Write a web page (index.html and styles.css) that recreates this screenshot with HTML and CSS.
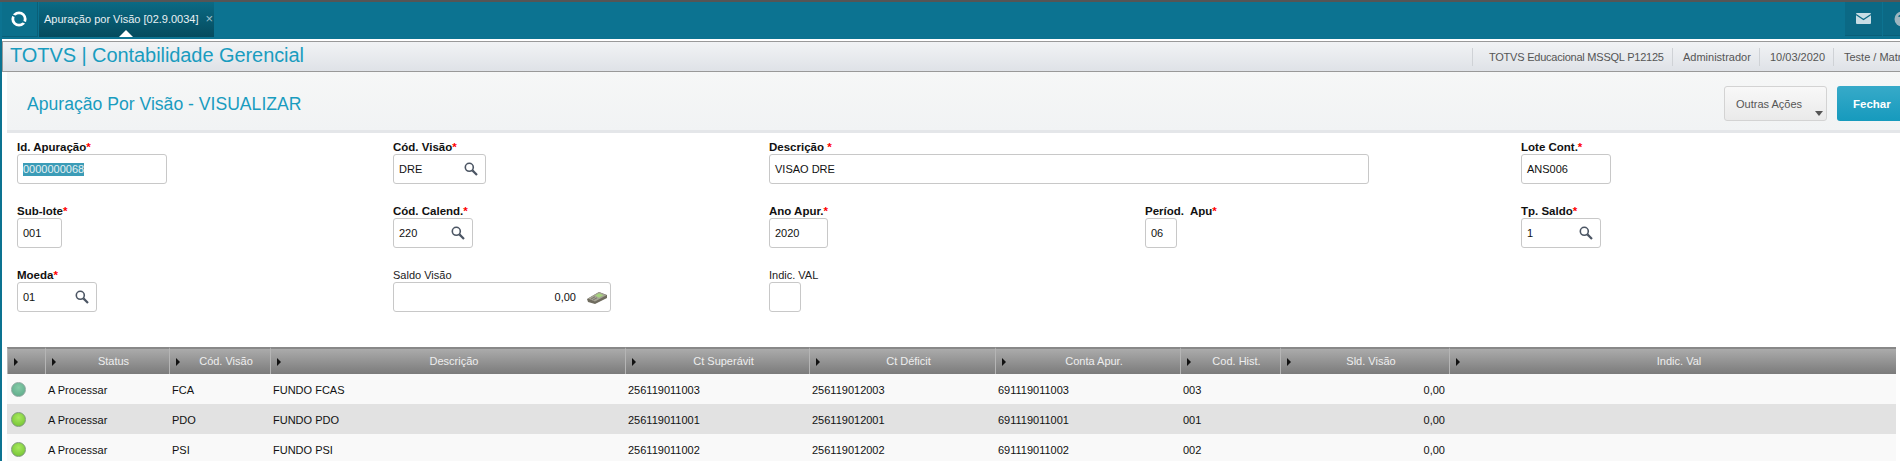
FILE: index.html

```html
<!DOCTYPE html>
<html lang="pt-BR">
<head>
  <meta charset="UTF-8">
  <title>Apuração por Visão</title>
  <link rel="stylesheet" href="styles.css">
</head>
<body>

  <div class="topbar">
    <div class="logo">
      <svg width="20" height="20" viewBox="0 0 20 20">
        <circle cx="10" cy="10" r="6.2" fill="none" stroke="#fff" stroke-width="2.8"/>
        <path d="M3 6 L11 9.5 M9 10.5 L17 14" fill="none" stroke="#0b6f8b" stroke-width="1.8"/>
      </svg>
    </div>
    <div class="tab">
      <span>Apuração por Visão [02.9.0034]</span>
      <span class="tab-close">×</span>
    </div>
    <div class="top-icons">
      <div class="top-icon">
        <svg width="15" height="11" viewBox="0 0 15 11">
          <rect width="15" height="11" rx="1" fill="#c8dde5"/>
          <path d="M0 1.5 L7.5 6.5 L15 1.5" fill="none" stroke="#0b6985" stroke-width="1.2"/>
        </svg>
      </div>
      <div class="top-icon">
        <svg width="16" height="16" viewBox="0 0 16 16">
          <circle cx="8" cy="8" r="7.5" fill="#9db6c0"/>
          <path d="M5 6 C5 3.5 11 3.5 11 6" fill="none" stroke="#0b6985" stroke-width="1.5"/>
        </svg>
      </div>
    </div>
  </div>

  <div class="main">
    <div class="app-header">
      <div class="app-title">TOTVS | Contabilidade Gerencial</div>
      <div class="app-info">
        <span class="info-env">TOTVS Educacional MSSQL P12125</span>
        <span class="info-user">Administrador</span>
        <span class="info-date">10/03/2020</span>
        <span class="info-branch">Teste / Matriz</span>
      </div>
    </div>

    <div class="content">
      <div class="page-head">
        <h1>Apuração Por Visão - VISUALIZAR</h1>
        <div class="actions">
          <button class="btn btn-more">Outras Ações<i class="caret"></i></button>
          <button class="btn btn-close">Fechar</button>
        </div>
      </div>

      <div class="form">
        <div class="field">
          <label class="req">Id. Apuração<b>*</b></label>
          <div class="input w-id"><span class="selected">0000000068</span></div>
        </div>
        <div class="field">
          <label class="req">Cód. Visão<b>*</b></label>
          <div class="input w-visao">DRE
            <svg class="lupa" viewBox="0 0 14 14"><circle cx="5.3" cy="5.3" r="4" fill="#fff" stroke="#4b5563" stroke-width="1.6"/><path d="M8.4 8.4 L13 13" stroke="#4b5563" stroke-width="2.2"/></svg>
          </div>
        </div>
        <div class="field span-2">
          <label class="req">Descrição <b>*</b></label>
          <div class="input w-desc">VISAO DRE</div>
        </div>
        <div class="field">
          <label class="req">Lote Cont.<b>*</b></label>
          <div class="input w-lote">ANS006</div>
        </div>

        <div class="field">
          <label class="req">Sub-lote<b>*</b></label>
          <div class="input w-sub">001</div>
        </div>
        <div class="field">
          <label class="req">Cód. Calend.<b>*</b></label>
          <div class="input w-lookup">220
            <svg class="lupa" viewBox="0 0 14 14"><circle cx="5.3" cy="5.3" r="4" fill="#fff" stroke="#4b5563" stroke-width="1.6"/><path d="M8.4 8.4 L13 13" stroke="#4b5563" stroke-width="2.2"/></svg>
          </div>
        </div>
        <div class="field">
          <label class="req">Ano Apur.<b>*</b></label>
          <div class="input w-ano">2020</div>
        </div>
        <div class="field">
          <label class="req">Períod.&nbsp; Apu<b>*</b></label>
          <div class="input w-per">06</div>
        </div>
        <div class="field">
          <label class="req">Tp. Saldo<b>*</b></label>
          <div class="input w-lookup">1
            <svg class="lupa" viewBox="0 0 14 14"><circle cx="5.3" cy="5.3" r="4" fill="#fff" stroke="#4b5563" stroke-width="1.6"/><path d="M8.4 8.4 L13 13" stroke="#4b5563" stroke-width="2.2"/></svg>
          </div>
        </div>

        <div class="field">
          <label class="req">Moeda<b>*</b></label>
          <div class="input w-lookup">01
            <svg class="lupa" viewBox="0 0 14 14"><circle cx="5.3" cy="5.3" r="4" fill="#fff" stroke="#4b5563" stroke-width="1.6"/><path d="M8.4 8.4 L13 13" stroke="#4b5563" stroke-width="2.2"/></svg>
          </div>
        </div>
        <div class="field">
          <label>Saldo Visão</label>
          <div class="input w-saldo">
            <span class="amount">0,00</span>
            <svg class="calc" viewBox="0 0 20 13">
              <path d="M0 8 L12 1 L20 4 L20 7 L8 13 L1 11 Z" fill="#6f6c5f"/>
              <path d="M1 7.5 L12 1 L19.5 4.2 L8 10.5 Z" fill="#a5a395"/>
              <path d="M8 4.5 L12 2.3 L16.5 4.3 L12 6.8 Z" fill="#a6d37e"/>
              <path d="M4 8 L8 5.8 M6 9 L10 6.8" stroke="#6f6c5f" stroke-width="0.8"/>
            </svg>
          </div>
        </div>
        <div class="field">
          <label>Indic. VAL</label>
          <div class="input w-indic"></div>
        </div>
      </div>

      <table class="grid">
        <colgroup>
          <col class="c-led"><col class="c-status"><col class="c-cod"><col class="c-desc"><col class="c-sup"><col class="c-def"><col class="c-conta"><col class="c-hist"><col class="c-sld"><col class="c-ind">
        </colgroup>
        <thead>
          <tr>
            <th></th>
            <th>Status</th>
            <th>Cód. Visão</th>
            <th>Descrição</th>
            <th>Ct Superávit</th>
            <th>Ct Déficit</th>
            <th>Conta Apur.</th>
            <th>Cod. Hist.</th>
            <th>Sld. Visão</th>
            <th>Indic. Val</th>
          </tr>
        </thead>
        <tbody>
          <tr>
            <td><i class="led led-first"></i></td>
            <td>A Processar</td>
            <td>FCA</td>
            <td>FUNDO FCAS</td>
            <td>256119011003</td>
            <td>256119012003</td>
            <td>691119011003</td>
            <td>003</td>
            <td class="num">0,00</td>
            <td></td>
          </tr>
          <tr>
            <td><i class="led"></i></td>
            <td>A Processar</td>
            <td>PDO</td>
            <td>FUNDO PDO</td>
            <td>256119011001</td>
            <td>256119012001</td>
            <td>691119011001</td>
            <td>001</td>
            <td class="num">0,00</td>
            <td></td>
          </tr>
          <tr>
            <td><i class="led"></i></td>
            <td>A Processar</td>
            <td>PSI</td>
            <td>FUNDO PSI</td>
            <td>256119011002</td>
            <td>256119012002</td>
            <td>691119011002</td>
            <td>002</td>
            <td class="num">0,00</td>
            <td></td>
          </tr>
        </tbody>
      </table>
    </div>
  </div>

</body>
</html>
```

FILE: styles.css

```css
* {
  box-sizing: border-box;
}
html, body {
  height: 461px;
  overflow: hidden;
}
body {
  margin: 0;
  font-family: "Liberation Sans", Arial, sans-serif;
  font-size: 11px;
  color: #111;
  background-color: #0c7391;
}

/* barra superior */
.topbar {
  display: flex;
  height: 39px;
  background-color: #0c7391;
  border-top: 2px solid #555;
}
.logo {
  width: 36px;
  height: 35px;
  margin-left: 2px;
  padding-right: 2px;
  display: flex;
  align-items: center;
  justify-content: center;
  background-color: #0b6f8b;
  border-right: 1px solid #0a5f78;
  border-bottom: 1px solid #0a5f78;
}
.tab {
  position: relative;
  width: 175px;
  height: 35px;
  margin-left: 1px;
  padding: 11px 0 0 5px;
  white-space: nowrap;
  color: #e8f1f4;
  background: linear-gradient(#0b6a84, #054b5e);
}
.tab::after {
  content: "";
  position: absolute;
  left: 80px;
  bottom: 0;
  border: 7px solid transparent;
  border-top: 0;
  border-bottom-color: #fff;
}
.tab-close {
  margin-left: 4px;
  font-size: 13px;
  line-height: 11px;
  color: #9fc0cb;
}
.top-icons {
  display: flex;
  gap: 1px;
  margin-left: auto;
  margin-right: -20px;
}
.top-icon {
  width: 37px;
  height: 34px;
  display: flex;
  align-items: center;
  justify-content: center;
  background-color: #0b6985;
  border-bottom: 1px solid #0a5f78;
}

/* area principal */
.main {
  height: 422px;
  margin-left: 2px;
  padding-top: 2px;
  background-color: #fff;
}
.app-header {
  display: flex;
  align-items: center;
  justify-content: space-between;
  height: 31px;
  padding-left: 7px;
  background: linear-gradient(#f1f3f5, #dfe2e7);
  border-top: 1px solid #999;
  border-bottom: 1px solid #999;
  border-left: 1px solid #999;
}
.app-title {
  margin-bottom: 2px;
  font-size: 20px;
  letter-spacing: -0.07px;
  color: #199cbf;
}
.app-info {
  display: flex;
  flex: none;
  width: 428px;
  overflow: hidden;
  white-space: nowrap;
  color: #555;
}
.app-info span {
  flex: none;
  padding-left: 10px;
  line-height: 18px;
  border-left: 1px solid #cfd2d6;
}
.app-info .info-env {
  width: 200px;
  padding-left: 16px;
  letter-spacing: -0.23px;
}
.info-user { width: 87px; }
.info-date { width: 74px; }
.info-branch { width: 67px; }

.content {
  padding-left: 5px;
}
.page-head {
  display: flex;
  justify-content: space-between;
  height: 61px;
  padding: 14px 0 0 20px;
  background: linear-gradient(#f6f7f7, #f1f3f4);
  border-bottom: 3px solid #e4e6e9;
}
h1 {
  margin: 8px 0 0;
  font-size: 17.6px;
  font-weight: normal;
  color: #199cbf;
}
.actions {
  display: flex;
  gap: 10px;
  margin-right: -7px;
}
.btn {
  position: relative;
  height: 35px;
  border-radius: 3px;
  font-family: inherit;
  font-size: 11px;
  cursor: pointer;
}
.btn-more {
  width: 103px;
  padding: 0 0 0 11px;
  text-align: left;
  color: #555;
  background: linear-gradient(#f8f8f8, #eaeaea);
  border: 1px solid #d3d3d3;
}
.btn-close {
  width: 70px;
  padding-left: 16px;
  text-align: left;
  font-size: 11.5px;
  font-weight: bold;
  color: #fff;
  background: linear-gradient(#37aac9, #169abd);
  border: none;
}
.caret {
  position: absolute;
  right: 3px;
  bottom: 4px;
  border: 4.5px solid transparent;
  border-bottom: 0;
  border-top: 5px solid #555;
}

/* formulario */
.form {
  display: grid;
  grid-template-columns: repeat(5, 376px);
  grid-auto-rows: 64px;
  height: 214px;
  padding: 7px 0 0 10px;
}
.span-2 {
  grid-column: span 2;
}
label {
  display: block;
  height: 14px;
  line-height: 14px;
  color: #222;
}
label.req {
  font-size: 11.5px;
  font-weight: bold;
  color: #111;
}
label b {
  color: #f00;
}
.input {
  position: relative;
  display: flex;
  align-items: center;
  height: 30px;
  padding-left: 5px;
  background-color: #fff;
  border: 1px solid #c8c8c8;
  border-radius: 3px;
  color: #111;
}
.selected {
  line-height: 13px;
  color: #e4f0f3;
  background-color: #3b9cb7;
}
.w-id { width: 150px; }
.w-visao { width: 93px; }
.w-desc { width: 600px; }
.w-lote { width: 90px; }
.w-sub { width: 45px; }
.w-lookup { width: 80px; }
.w-ano { width: 59px; }
.w-per { width: 32px; }
.w-saldo { width: 218px; justify-content: flex-end; }
.w-indic { width: 32px; }
.lupa {
  position: absolute;
  right: 7px;
  top: 7px;
  width: 14px;
  height: 14px;
}
.amount {
  margin-right: 34px;
}
.calc {
  position: absolute;
  right: 3px;
  top: 8px;
  width: 20px;
  height: 13px;
}

/* grid */
.grid {
  width: 1889px;
  border-collapse: separate;
  border-spacing: 0;
  table-layout: fixed;
}
.c-led { width: 38px; }
.c-status { width: 124px; }
.c-cod { width: 101px; }
.c-desc { width: 355px; }
.c-sup { width: 184px; }
.c-def { width: 186px; }
.c-conta { width: 185px; }
.c-hist { width: 100px; }
.c-sld { width: 169px; }
.c-ind { width: 447px; }

.grid th {
  position: relative;
  height: 27px;
  padding: 0 0 2px 12px;
  font-weight: normal;
  color: #eee;
  background: linear-gradient(#ababab, #7b7b7b);
  border-top: 2px solid #888;
  border-left: 1px solid #b5b5b5;
}
.grid th::before {
  content: "";
  position: absolute;
  left: 6px;
  top: 9px;
  border: 4px solid transparent;
  border-right: 0;
  border-left: 4px solid #111;
}
.grid td {
  height: 30px;
  padding: 1px 4px 0 3px;
  white-space: nowrap;
  color: #111;
}
.grid td:first-child {
  padding: 0 0 0 4px;
}
.grid tbody tr {
  background-color: #f9f9f9;
}
.grid tbody tr:nth-child(2) {
  background-color: #e2e2e2;
}
.grid .num {
  text-align: right;
}
.led {
  display: block;
  width: 15px;
  height: 15px;
  border-radius: 50%;
  background: radial-gradient(circle at 50% 35%, #a8ea5e, #7ecb3c 70%, #6aa838);
  border: 1px solid #7f9a7c;
}
.led-first {
  background: radial-gradient(circle at 50% 35%, #86cba8, #66b290 70%, #5a9a84);
  border-color: #8fa8a0;
}
```
